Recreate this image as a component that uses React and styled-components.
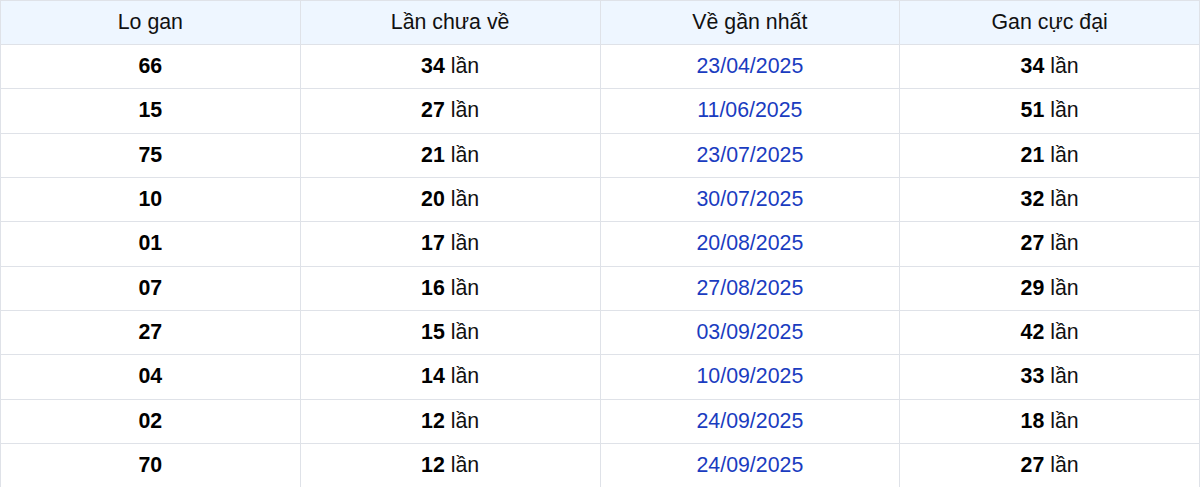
import React from "react";
import styled, { createGlobalStyle } from "styled-components";

const Global = createGlobalStyle`
  html, body { margin: 0; padding: 0; background: #fff; }
  body { font-family: "Liberation Sans", Arial, sans-serif; }
`;

const Table = styled.table`
  width: 1200px;
  border-collapse: collapse;
  table-layout: fixed;
  font-family: "Liberation Sans", Arial, sans-serif;
  font-size: 21.33px;
  color: #111;
`;

const HeadCell = styled.th`
  height: 43px;
  padding: 0;
  font-weight: normal;
  text-align: center;
  background: #eef6ff;
  border: 1px solid #dfe2e8;
  color: #111;
`;

const Cell = styled.td`
  height: 43.33px;
  padding: 0;
  text-align: center;
  border: 1px solid #dfe2e8;
  color: ${(p) => (p.$date ? "#1a3cc0" : "#111")};
`;

const Num = styled.b`
  font-weight: bold;
  color: #000;
`;

const rows = [
  ["66", 34, "23/04/2025", 34],
  ["15", 27, "11/06/2025", 51],
  ["75", 21, "23/07/2025", 21],
  ["10", 20, "30/07/2025", 32],
  ["01", 17, "20/08/2025", 27],
  ["07", 16, "27/08/2025", 29],
  ["27", 15, "03/09/2025", 42],
  ["04", 14, "10/09/2025", 33],
  ["02", 12, "24/09/2025", 18],
  ["70", 12, "24/09/2025", 27],
];

export default function App() {
  return (
    <>
      <Global />
      <Table>
        <thead>
          <tr>
            <HeadCell>Lo gan</HeadCell>
            <HeadCell>Lần chưa về</HeadCell>
            <HeadCell>Về gần nhất</HeadCell>
            <HeadCell>Gan cực đại</HeadCell>
          </tr>
        </thead>
        <tbody>
          {rows.map((r, i) => (
            <tr key={i}>
              <Cell>
                <Num>{r[0]}</Num>
              </Cell>
              <Cell>
                <Num>{r[1]}</Num> lần
              </Cell>
              <Cell $date>{r[2]}</Cell>
              <Cell>
                <Num>{r[3]}</Num> lần
              </Cell>
            </tr>
          ))}
        </tbody>
      </Table>
    </>
  );
}
